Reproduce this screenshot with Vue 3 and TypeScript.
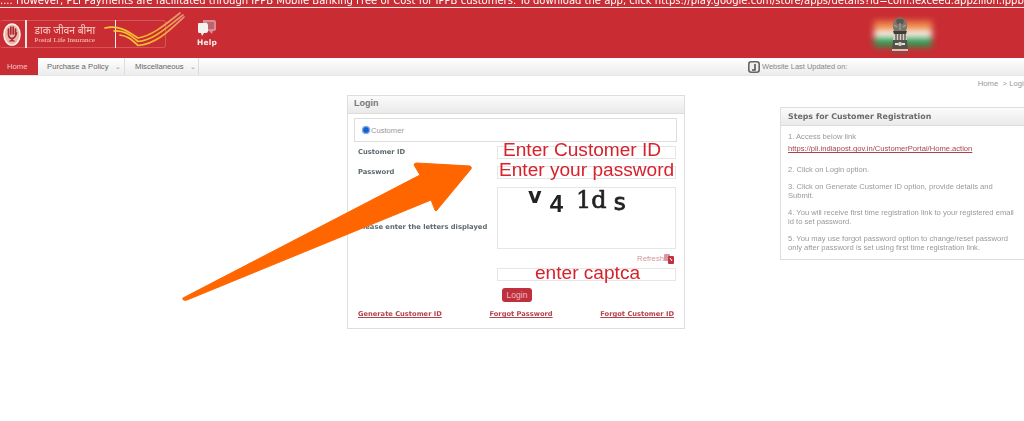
<script setup lang="ts">
const steps: string[] = [
  '2. Click on Login option.',
  '3. Click on Generate Customer ID option, provide details and Submit.',
  '4. You will receive first time registration link to your registered email id to set password.',
  '5. You may use forgot password option to change/reset password only after password is set using first time registration link.'
]
const tail = 'M183 298 L420 175 L414 165 Q414 163 417 163 L470 166 Q472 167 471 169 L437 210 Q436 212 435 210 L431 200 L187 300 Q182 301 183 298 Z'
</script>

<template>
  <div class="page">
    <div class="ticker"><p>.... However, PLI Payments are facilitated through IPPB Mobile Banking Free of Cost for IPPB customers.  To download the app, click https://play.google.com/store/apps/details?id=com.lexceed.appzillon.ippbMB</p></div>

    <header class="header">
      <div class="logo">
        <svg class="seal" width="18" height="23" viewBox="0 0 18 23">
          <ellipse cx="9" cy="11.5" rx="8" ry="10.5" fill="#f0b8ad" stroke="#fbf1ea" stroke-width="1.6"/>
          <path d="M5.5 12V6M7.8 11V4M10.2 11V4M12.5 12V6M5.5 12Q6 15.5 9 15.5Q12 15.5 13.5 10" stroke="#a92a33" stroke-width="1.7" fill="none" stroke-linecap="round"/>
          <path d="M5.5 18.5h7l-3.5-2.8z" fill="#a92a33"/>
        </svg>
        <i class="rule"></i>
        <div class="logo-text">
          <span class="hi">डाक जीवन बीमा</span>
          <span class="en">Postal Life Insurance</span>
        </div>
        <i class="rule rule-two"></i>
      </div>
      <svg class="swoosh" width="125" height="50" viewBox="0 0 125 50">
        <defs>
          <linearGradient id="sw" x1="0" y1="0" x2="1" y2="0">
            <stop offset="0" stop-color="#f7c93a"/>
            <stop offset="0.62" stop-color="#f3b02a"/>
            <stop offset="1" stop-color="#e98f7c"/>
          </linearGradient>
        </defs>
        <g fill="none" stroke="url(#sw)" stroke-width="1.7" stroke-linecap="round">
          <path d="M5 20C18 17 26 22 38 30C52 28 66 16 80 5"/>
          <path d="M14 23C24 22 30 27 38 33.5C54 32 67 19 83 7"/>
          <path d="M20 27C28 28 32 32 38 37.5C56 36 69 23 84 9"/>
        </g>
      </svg>
      <div class="help">
        <svg width="18" height="17" viewBox="0 0 18 17">
          <path d="M5 0h11q2 0 2 2v7q0 2-2 2h-1l-1 3-3-3H5z" fill="#d98d92"/>
          <path d="M9 2h6q1 0 1 1v5q0 1-1 1H9z" fill="#b9656b"/>
          <path d="M1 3h7q2 0 2 2v6q0 2-2 2H6l-2 3-1-3H1q-1 0-1-2V4q0-1 1-1z" fill="#f4f1f1"/>
        </svg>
        <span>Help</span>
      </div>
      <div class="emblem">
        <div class="flag"><i class="band saffron"></i><i class="band pale"></i><i class="band green"></i></div>
        <svg class="lions" width="20" height="43" viewBox="0 0 20 43">
          <path d="M4 16Q1 8 6 4Q10 0 14 4Q19 8 16 16z" fill="#7b766c"/>
          <path d="M6 5Q10 2 14 5L13 9H7z" fill="#5b574f"/>
          <path d="M4 10l3 2M16 10l-3 2M10 8v7" stroke="#a8a296" stroke-width="1.2"/>
          <path d="M3 16h14l-1 3H4z" fill="#3f3c37"/>
          <path d="M4 19h12l1 6H3z" fill="#d9d2c4"/>
          <path d="M6 19v6M9 19v6M12 19v6M15 19v6" stroke="#4a4740" stroke-width="1.2"/>
          <path d="M3 25h14l1 9H2z" fill="#55524b"/>
          <path d="M5 29h3M12 29h3" stroke="#e6e0d3" stroke-width="1.8"/>
          <circle cx="10" cy="29" r="2" fill="#d8d2c5"/>
          <path d="M2 35h16" stroke="#efe8dc" stroke-width="1.5"/>
          <path d="M2 38.5h16" stroke="#6c5a55" stroke-width="2" stroke-dasharray="2 1"/>
        </svg>
      </div>
    </header>

    <nav class="nav">
      <a class="tab active">Home</a>
      <a class="tab purchase">Purchase a Policy<b>⌄</b></a>
      <a class="tab misc">Miscellaneous<b>⌄</b></a>
      <div class="updated">
        <svg width="12" height="12" viewBox="0 0 12 12">
          <rect x="0.8" y="0.8" width="10.4" height="10.4" rx="2.5" fill="#eee" stroke="#666" stroke-width="1.6"/>
          <path d="M7 3v6H4" stroke="#555" stroke-width="1.6" fill="none"/>
        </svg>
        <span>Website Last Updated on:</span>
      </div>
    </nav>

    <div class="crumb">Home &nbsp;&gt; Login</div>

    <main class="main">
      <section class="panel login">
        <h2 class="panel-title">Login</h2>
        <div class="choice">
          <span class="radio"></span>
          <span>Customer</span>
        </div>
        <div class="form">
          <label class="lab r1">Customer ID</label>
          <div class="inp note r1 f1">Enter Customer ID</div>
          <label class="lab r2">Password</label>
          <div class="inp note r2 f2">Enter your password</div>
          <label class="lab r3">Please enter the letters displayed</label>
          <div class="captcha r3">
            <span class="c1">v</span><span class="c2">4</span><span class="c3">1d</span><span class="c4">s</span>
          </div>
          <div class="refresh r4">Refresh
            <svg width="10" height="11" viewBox="0 0 10 11">
              <rect x="0" y="1" width="6" height="7" rx="1" fill="#d9989c"/>
              <rect x="4" y="3" width="6" height="8" rx="1" fill="#bf3340"/>
              <path d="M6 5l2 3" stroke="#fff" stroke-width="1"/>
            </svg>
          </div>
          <div class="inp note r5 f3">enter captca</div>
        </div>
        <div class="btn-row"><button class="btn" type="button">Login</button></div>
        <div class="links">
          <a>Generate Customer ID</a>
          <a>Forgot Password</a>
          <a>Forgot Customer ID</a>
        </div>
      </section>

      <aside class="panel steps">
        <h2 class="panel-title steps-title">Steps for Customer Registration</h2>
        <div class="steps-body">
          <p class="first">1. Access below link</p>
          <a class="url">https://pli.indiapost.gov.in/CustomerPortal/Home.action</a>
          <p v-for="s in steps" :key="s">{{ s }}</p>
        </div>
      </aside>
    </main>

    <svg class="arrow" width="1024" height="421" viewBox="0 0 1024 421">
      <path :d="tail" fill="#ff6600" stroke="#ff6600" stroke-width="1" stroke-linejoin="round"/>
    </svg>
  </div>
</template>

<style>
html, body { margin: 0; background: #fff; }
</style>

<style scoped>
.page {
  position: relative;
  width: 1024px;
  height: 421px;
  overflow: hidden;
  background: #fff;
  font-family: "Liberation Sans", Arial, sans-serif;
}
.ticker {
  height: 7px;
  background: #c92c33;
  overflow: hidden;
  border-bottom: 1px solid #f8e6e6;
}
.ticker p {
  margin: -6px 0 0;
  color: #fff;
  font: 10px/14px "DejaVu Sans", sans-serif;
  white-space: pre;
  filter: blur(0.3px);
}
.header {
  display: flex;
  height: 50px;
  background: #c92c33;
  position: relative;
}
.logo {
  display: flex;
  align-items: center;
  flex: none;
  box-sizing: border-box;
  width: 166px;
  height: 28px;
  margin-top: 12px;
  padding-left: 3px;
  border: 1px solid #d4565b;
  border-left: 0;
  border-radius: 3px;
  filter: blur(0.35px);
}
.seal { flex: none; }
.rule { width: 1.5px; height: 28px; background: #f7e3e3; margin-left: 4px; flex: none; }
.logo .rule-two { margin-left: 9px; background: #fbeeee; }
.logo-text {
  display: flex;
  flex-direction: column;
  flex: none;
  margin-left: 8px;
  width: 71px;
  color: #f4cfc6;
  white-space: nowrap;
}
.hi { font: 10.3px/12px "Noto Sans", "DejaVu Sans", sans-serif; }
.en { font: 7.1px/9px "Liberation Serif", serif; }
.swoosh { margin-left: -66px; flex: none; filter: blur(0.3px); }
.help {
  flex: none;
  margin: 12px 0 0 -28px;
  display: flex;
  flex-direction: column;
  align-items: center;
  color: #f6eeee;
  font: bold 7.5px/11px "DejaVu Sans", sans-serif;
  letter-spacing: 0.2px;
}
.help svg { filter: blur(0.6px); }
.help span { filter: blur(0.3px); }
.emblem {
  position: absolute;
  left: 868px;
  top: 0;
  width: 70px;
  height: 50px;
}
.flag {
  position: absolute;
  left: 6px;
  right: 6px;
  top: 13px;
  height: 26px;
  display: flex;
  flex-direction: column;
  filter: blur(3px);
}
.band { flex: 1; display: block; }
.saffron { background: #ee8a4a; }
.pale { background: #f6f0e8; }
.green { background: #2f9a52; }
.lions {
  position: absolute;
  left: 22px;
  top: 7px;
  filter: blur(0.5px);
}
.nav {
  display: flex;
  height: 17px;
  background: linear-gradient(#fff, #ececec);
  border-bottom: 1px solid #e6e6e6;
  color: #666;
  font-size: 7.7px;
  line-height: 17px;
  white-space: nowrap;
}
.tab { display: block; flex: none; box-sizing: border-box; }
.tab b { font-weight: 400; font-size: 7px; color: #999; margin-left: 6px; }
.active { width: 38px; padding-left: 7px; background: #c92c33; color: #f0c8c8; }
.purchase { width: 87px; padding-left: 9px; border-right: 1px solid #ddd; }
.misc { width: 74px; padding-left: 10px; border-right: 1px solid #ddd; }
.updated {
  display: flex;
  align-items: center;
  gap: 2px;
  margin-left: 549px;
  font-size: 7.45px;
  color: #888;
}
.crumb {
  height: 19px;
  margin-right: -4px;
  text-align: right;
  color: #999;
  font-size: 7.7px;
  line-height: 16px;
  white-space: nowrap;
}
.main {
  display: flex;
  align-items: flex-start;
  padding-left: 347px;
}
.panel {
  box-sizing: border-box;
  border: 1px solid #dedede;
  flex: none;
}
.login { width: 338px; height: 234px; }
.panel-title {
  margin: 0;
  height: 17px;
  padding-left: 6px;
  background: linear-gradient(#fbfbfb, #eaeaea);
  border-bottom: 1px solid #ddd;
  color: #777;
  font-size: 9px;
  line-height: 15px;
  font-weight: 700;
}
.choice {
  display: flex;
  align-items: center;
  box-sizing: border-box;
  height: 24px;
  margin: 4px 7px 0 6px;
  padding-left: 7px;
  border: 1px solid #ddd;
  color: #999;
  font-size: 7.6px;
}
.radio {
  box-sizing: border-box;
  width: 8px;
  height: 8px;
  margin-right: 1px;
  border-radius: 50%;
  border: 1.5px solid #8fb4f2;
  background: #1a5fd0;
  box-shadow: 0 0 1px #6b9aea;
}
.form {
  display: grid;
  grid-template-columns: 149px 179px;
  grid-template-rows: 13px 13px 63px 5px 13px;
  row-gap: 7px;
  margin-top: 4px;
}
.r1 { grid-row: 1; }
.r2 { grid-row: 2; }
.r3 { grid-row: 3; }
.r4 { grid-row: 4; }
.r5 { grid-row: 5; }
.lab {
  grid-column: 1;
  padding-left: 10px;
  color: #5e6a6e;
  font: bold 6.75px/13px "DejaVu Sans", sans-serif;
  white-space: nowrap;
  filter: blur(0.25px);
}
.lab.r3 { align-self: start; margin-top: 35px; }
.inp {
  grid-column: 2;
  box-sizing: border-box;
  border: 1px solid #e6e6e6;
}
.note {
  color: #d7212c;
  font-size: 19.1px;
  white-space: nowrap;
  filter: blur(0.2px);
}
.f1 { padding-left: 5px; line-height: 6px; }
.f2 { padding-left: 1px; line-height: 6px; }
.f3 { padding-left: 37px; line-height: 7px; }
.captcha {
  grid-column: 2;
  box-sizing: border-box;
  height: 62px;
  margin-top: 1px;
  padding-left: 30px;
  border: 1px solid #e6e6e6;
  color: #222;
  display: flex;
  align-items: flex-start;
  filter: blur(0.3px);
}
.c1 { margin-top: -2px; font: bold 21px/1 "DejaVu Sans", sans-serif; }
.c2 { margin: 4px 0 0 8px; font: bold 24px/1 "Liberation Sans", sans-serif; }
.c3 { margin: 0 0 0 13px; font: 400 24px/1 "DejaVu Serif", serif; -webkit-text-stroke: 0.6px #222; }
.c4 { margin: 2.5px 0 0 7px; font: 400 23px/1 "DejaVu Sans", sans-serif; -webkit-text-stroke: 0.8px #222; }
.refresh {
  grid-column: 2;
  display: flex;
  justify-content: flex-end;
  align-items: center;
  color: #d49a9d;
  font-size: 7.7px;
  padding-right: 2px;
  height: 5px;
}
.btn-row { padding: 7px 0 0 154px; }
.btn {
  display: block;
  width: 30px;
  height: 14px;
  padding: 0;
  border: 0;
  border-radius: 3px;
  background: #c0303c;
  color: #eebcc0;
  font: 8.5px/14px "Liberation Sans", sans-serif;
}
.links {
  display: flex;
  justify-content: space-between;
  margin: 7px 10px 0;
  width: 316px;
  font: bold 6.7px/10px "DejaVu Sans", sans-serif;
  color: #b3434e;
  text-decoration: underline;
  filter: blur(0.25px);
}
.steps { width: 260px; height: 153px; margin: 12px 0 0 95px; }
.steps-title {
  height: 17px;
  padding-left: 7px;
  color: #6b6b6b;
  font: bold 7.86px/17px "DejaVu Sans", sans-serif;
  filter: blur(0.2px);
}
.steps-body {
  width: 232px;
  padding: 5.5px 0 0 7px;
  color: #999;
  font-size: 7.6px;
  line-height: 9px;
  filter: blur(0.2px);
}
.steps-body p { margin: 0 0 8px; }
.steps-body .first { margin-bottom: 3.7px; }
.url {
  display: block;
  margin-bottom: 12px;
  color: #a8434c;
  text-decoration: underline;
  white-space: nowrap;
}
.arrow {
  position: absolute;
  left: 0;
  top: 0;
  pointer-events: none;
}
</style>
